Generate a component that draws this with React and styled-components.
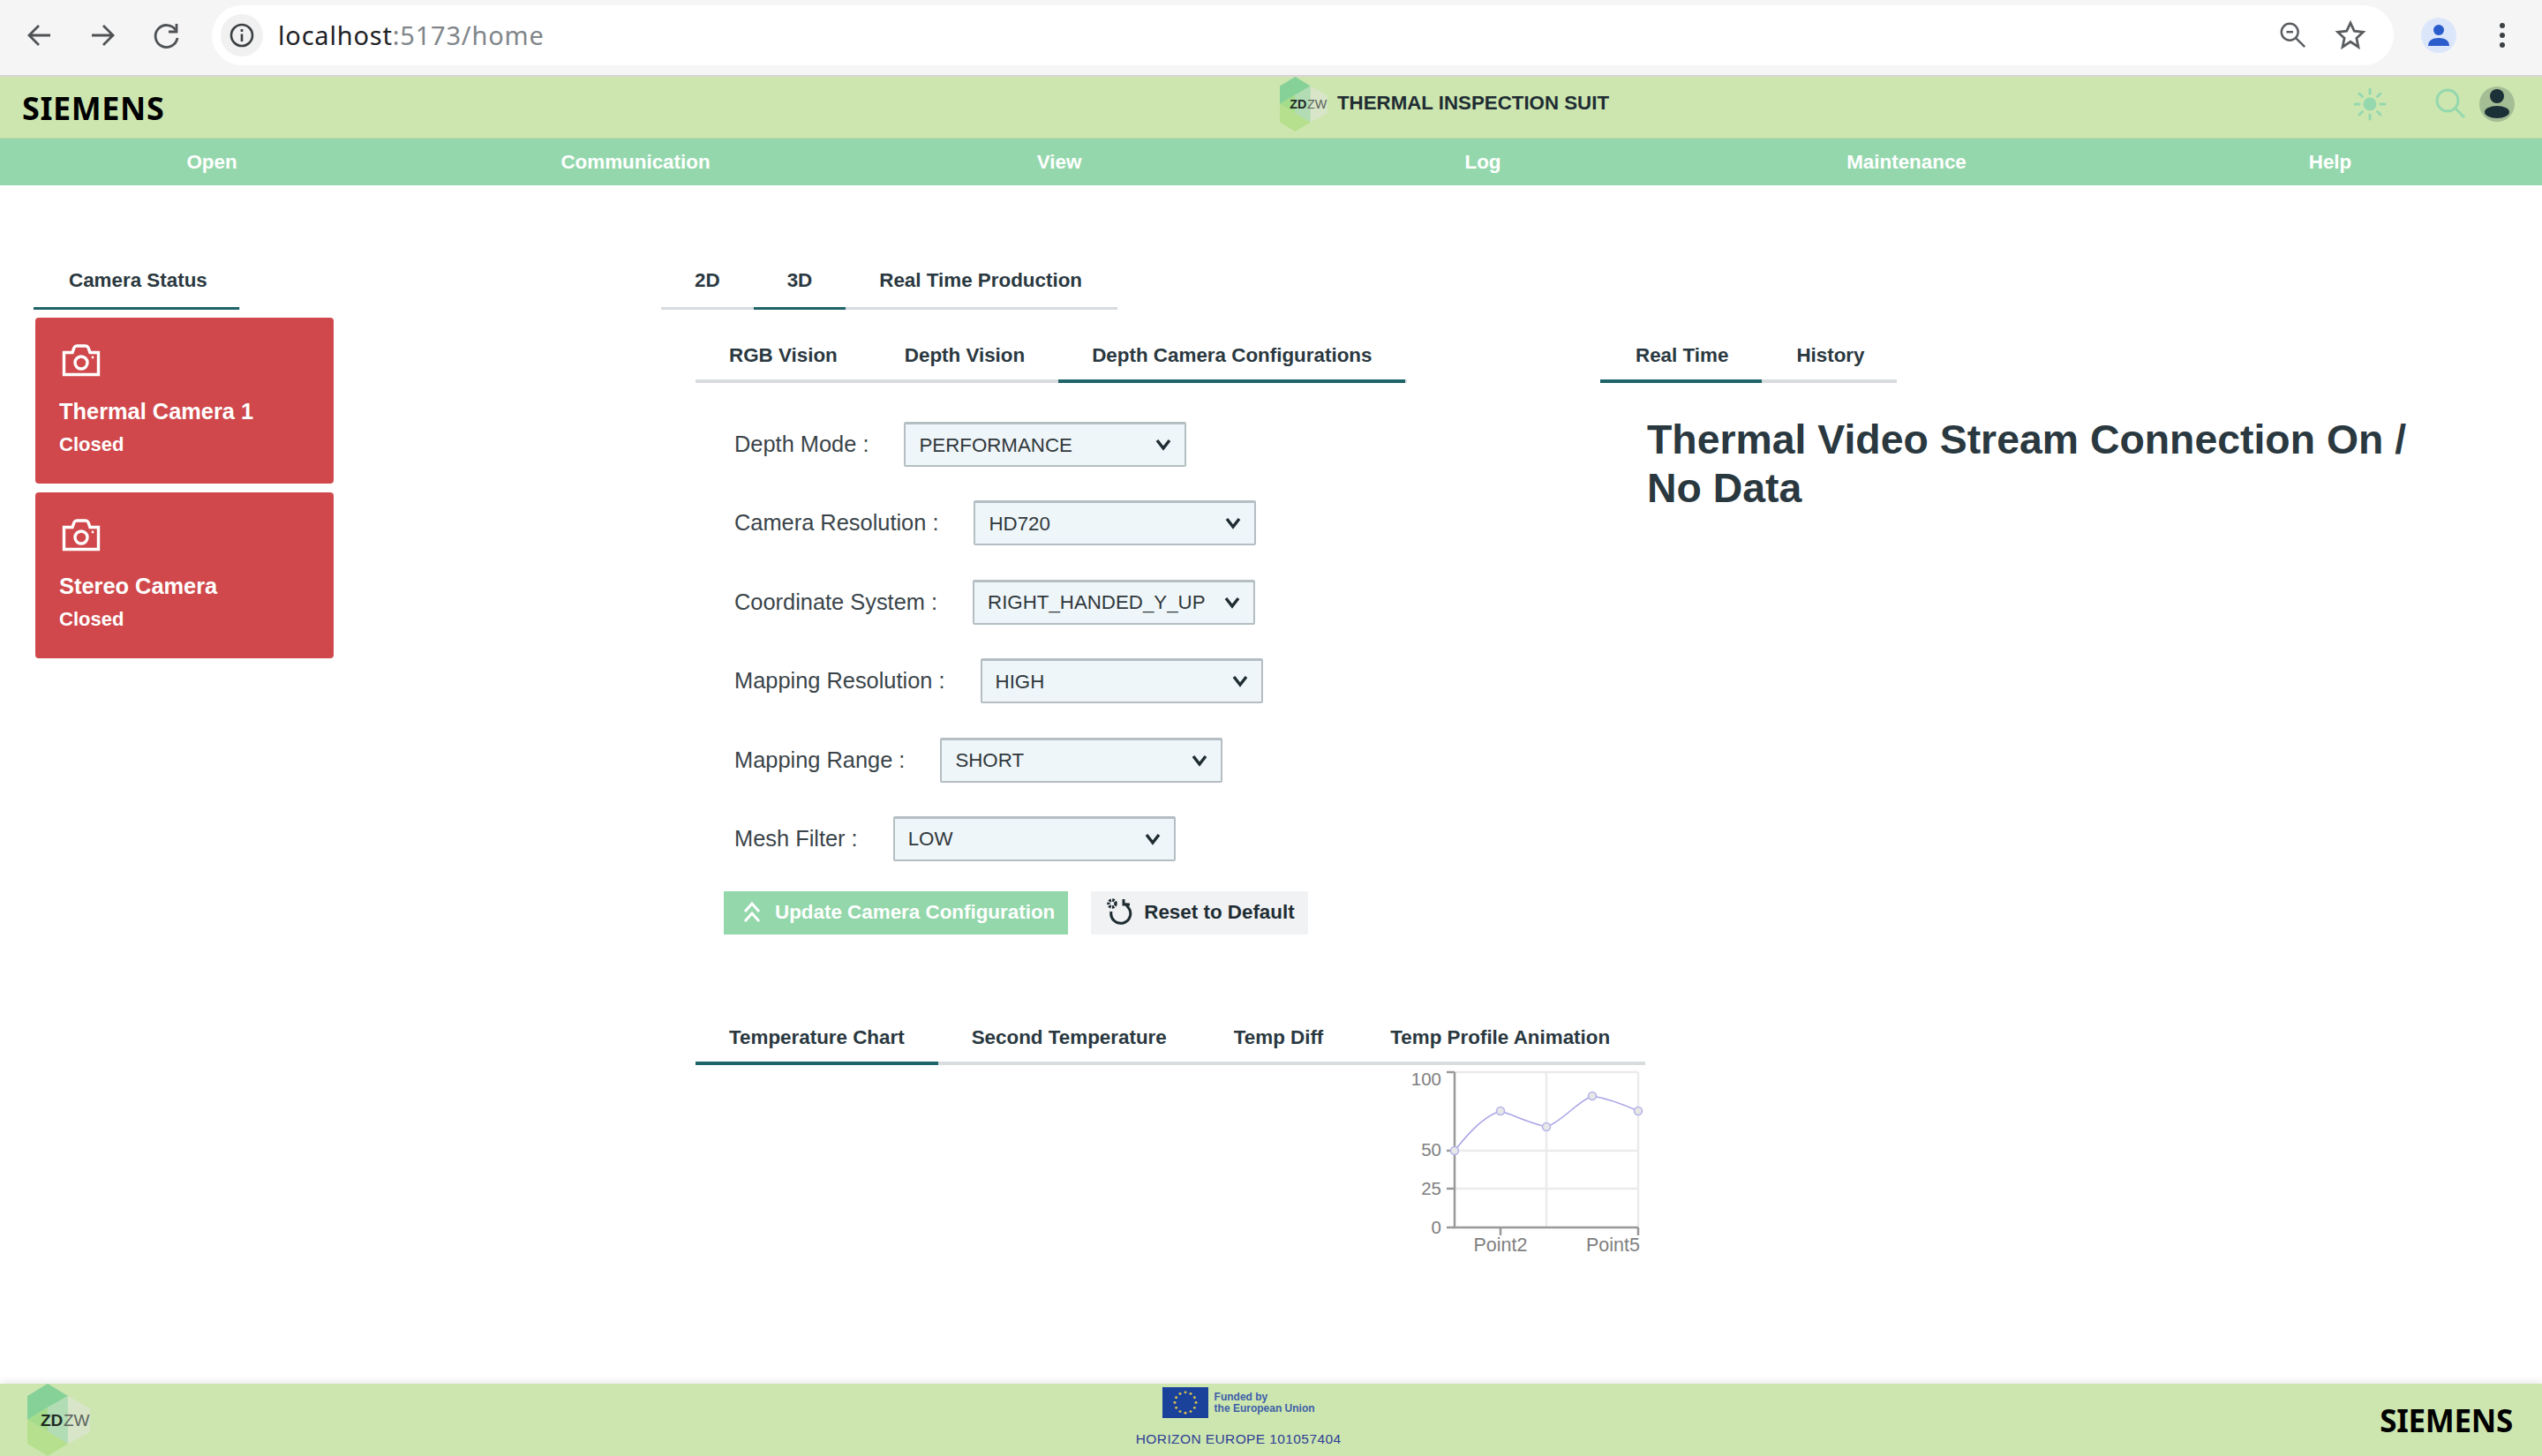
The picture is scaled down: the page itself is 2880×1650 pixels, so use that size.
import React from 'react';
import styled, { createGlobalStyle } from 'styled-components';

const GlobalStyle = createGlobalStyle`
  html, body {
    margin: 0;
    padding: 0;
    background: #fff;
    font-family: "Liberation Sans", Arial, sans-serif;
    overflow: hidden;
  }
  * { box-sizing: border-box; }
`;

const Page = styled.div`
  display: flex;
  flex-direction: column;
  width: 2880px;
  height: 1650px;
`;

/* browser chrome */
const BrowserBar = styled.div`
  display: flex;
  align-items: center;
  height: 87px;
  flex: none;
  padding: 0 0 5px 0;
  background: #f5f5f5;
  border-bottom: 2px solid #d9d4d4;
`;

const NavIcon = styled.svg`
  width: 36px;
  height: 36px;
  flex: none;
  margin-left: ${(p) => p.$left || 0}px;
  fill: none;
  stroke: #4f5255;
  stroke-width: 2.8;
`;

const AddressBar = styled.div`
  display: flex;
  align-items: center;
  width: 2472px;
  height: 68px;
  margin-left: 33px;
  padding-left: 10px;
  border-radius: 34px;
  background: #fff;
`;

const InfoBadge = styled.div`
  display: flex;
  align-items: center;
  justify-content: center;
  width: 48px;
  height: 48px;
  border-radius: 50%;
  background: #f1f1f1;
`;

const UrlText = styled.div`
  margin: 0 0 2px 17px;
  font-family: "Noto Sans", sans-serif;
  font-size: 29px;
  letter-spacing: 0.8px;
  color: #80868a;

  b {
    font-weight: 400;
    color: #202124;
  }
`;

const AddressEnd = styled.div`
  display: flex;
  align-items: center;
  gap: 30px;
  margin-left: auto;
  margin-right: 31px;
`;

const ProfileBadge = styled.div`
  display: flex;
  align-items: center;
  justify-content: center;
  width: 40px;
  height: 40px;
  margin-left: 31px;
  border-radius: 50%;
  background: #dce6fb;
`;

const MenuDots = styled.div`
  display: flex;
  flex-direction: column;
  gap: 5px;
  margin-left: 49px;

  i {
    display: block;
    width: 6px;
    height: 6px;
    border-radius: 50%;
    background: #3c4043;
  }
`;

/* app header */
const Header = styled.header`
  display: grid;
  grid-template-columns: 1450px 1fr auto;
  align-items: center;
  height: 70px;
  flex: none;
  padding-right: 31px;
  background: #cde6b0;
  border-bottom: 1px solid #c2d6a5;
`;

const Brand = styled.div`
  font-family: "Noto Sans", sans-serif;
  font-weight: 700;
  font-size: ${(p) => p.$size}px;
  letter-spacing: ${(p) => p.$spacing}px;
  color: #000;
  margin-left: ${(p) => p.$left || 0}px;
  margin-bottom: ${(p) => p.$bottom || 0}px;
`;

const TitleGroup = styled.div`
  display: flex;
  align-items: center;
  gap: 9px;
  margin-bottom: 8px;
`;

const Title = styled.div`
  margin-bottom: 2px;
  font-weight: 700;
  font-size: 22.3px;
  color: #1f2d33;
`;

const HeaderIcons = styled.div`
  display: flex;
  align-items: center;
  margin-bottom: 9px;
`;

const HeaderIcon = styled.svg`
  display: block;
  margin-left: ${(p) => p.$left || 0}px;
`;

const NavBar = styled.nav`
  display: grid;
  grid-template-columns: repeat(6, 1fr);
  align-items: center;
  height: 53px;
  flex: none;
  background: #95d7ad;
`;

const NavItem = styled.div`
  text-align: center;
  font-weight: 700;
  font-size: 22.4px;
  color: #fff;
`;

/* content */
const Main = styled.main`
  display: flex;
  flex: 1;
  padding: 82px 0 0 38px;
`;

const Sidebar = styled.aside`
  width: 711px;
  flex: none;
`;

const Cards = styled.div`
  display: flex;
  flex-direction: column;
  gap: 10px;
  width: 338px;
  margin: 9px 0 0 2px;
`;

const Card = styled.div`
  height: 188px;
  padding: 30px 27px 0;
  border-radius: 4px;
  background: #d0484b;
  color: #fff;
`;

const CardIcon = styled.svg`
  display: block;
  margin-left: 3px;
`;

const CardName = styled.div`
  margin-top: 23px;
  font-weight: 700;
  font-size: 25.4px;
  line-height: 32px;
`;

const CardStatus = styled.div`
  margin-top: 8px;
  font-weight: 700;
  font-size: 22px;
  line-height: 28px;
`;

const Tabs = styled.div`
  display: flex;
  width: ${(p) => p.$width}px;
  margin-top: ${(p) => p.$top || 0}px;
  border-bottom: ${(p) => p.$line || 4}px solid #d8dcdf;
`;

const Tab = styled.div`
  height: ${(p) => p.$height || 57}px;
  margin-bottom: -${(p) => p.$line || 4}px;
  padding: 0 ${(p) => p.$padRight || p.$pad || 38}px 0 ${(p) => p.$pad || 38}px;
  border-bottom: ${(p) => p.$line || 4}px solid ${(p) => (p.$active ? '#1f6468' : 'transparent')};
  font-weight: 700;
  font-size: 22.4px;
  line-height: 52px;
  white-space: nowrap;
  color: #2a3840;
`;

const Center = styled.section`
  display: flex;
  flex-direction: column;
  width: 1115px;
`;

const UpperRow = styled.div`
  display: flex;
  margin: 26px 0 0 39px;
`;

const ConfigPanel = styled.div`
  width: 1025px;
  flex: none;
`;

const Form = styled.form`
  display: flex;
  flex-direction: column;
  gap: 38.4px;
  margin: 44px 0 0 44px;
`;

const FormRow = styled.div`
  display: flex;
  align-items: center;
  gap: 40px;
`;

const Label = styled.label`
  font-size: 25.4px;
  color: #3a4449;
`;

const SelectWrap = styled.div`
  position: relative;
  width: 320px;
  height: 51px;
`;

const Select = styled.select`
  appearance: none;
  display: block;
  width: 100%;
  height: 100%;
  padding: 0 48px 0 15px;
  border: 2px solid #b4bec3;
  border-top-width: 3px;
  border-radius: 2px;
  background: #eff6f9;
  font-family: "Liberation Sans", Arial, sans-serif;
  font-size: 22.3px;
  color: #30383c;
`;

const Chevron = styled.svg`
  position: absolute;
  top: 17px;
  right: 16px;
  width: 20px;
  height: 18px;
  fill: none;
  stroke: #1f2d33;
  stroke-width: 3.4;
  pointer-events: none;
`;

const Actions = styled.div`
  display: flex;
  gap: 26px;
  margin: 34px 0 0 32px;
`;

const Button = styled.button`
  display: flex;
  align-items: center;
  gap: ${(p) => (p.$primary ? 16 : 12)}px;
  height: 49px;
  padding: 0 15px 0 ${(p) => (p.$primary ? 22 : 16)}px;
  border: 0;
  background: ${(p) => (p.$primary ? '#93d7ab' : '#f1f2f4')};
  color: ${(p) => (p.$primary ? '#fff' : '#1f2d33')};
  font-family: "Liberation Sans", Arial, sans-serif;
  font-weight: 700;
  font-size: 22.4px;
`;

const ThermalPanel = styled.div`
  width: 800px;
  flex: none;
`;

const ThermalText = styled.h2`
  width: 900px;
  margin: 37px 0 0 53px;
  font-weight: 700;
  font-size: 46.4px;
  line-height: 55px;
  color: #2a3840;
`;

const LowerBlock = styled.div`
  margin: 91px 0 0 39px;
  width: 1076px;
`;

const ChartRow = styled.div`
  display: flex;
  justify-content: flex-end;
  margin-top: 2px;
  padding-right: 20px;
`;

const ChartText = styled.text`
  font-family: "Liberation Sans", Arial, sans-serif;
  font-size: ${(p) => p.$size}px;
  fill: #808080;
`;

/* footer */
const Footer = styled.footer`
  display: flex;
  align-items: center;
  justify-content: space-between;
  height: 82px;
  flex: none;
  padding: 0 33px 0 31px;
  background: #cde6b0;
  box-shadow: 0 -3px 8px rgba(0, 0, 0, 0.08);
`;

const FooterCenter = styled.div`
  display: flex;
  flex-direction: column;
  align-items: center;
  gap: 15px;
  margin-left: 5px;
  padding-bottom: 6px;
`;

const EuRow = styled.div`
  display: flex;
  align-items: center;
  gap: 7px;
`;

const EuText = styled.div`
  font-weight: 700;
  font-size: 12px;
  line-height: 13px;
  color: #3d5fa8;
`;

const Horizon = styled.div`
  font-size: 15.5px;
  letter-spacing: 0.4px;
  color: #2f3f94;
`;

const LogoMark = styled.svg`
  display: block;
  flex: none;
`;

const LogoText = styled.text`
  font-family: "Liberation Sans", Arial, sans-serif;
  font-size: 19px;
  font-weight: ${(p) => (p.$strong ? 700 : 400)};
  fill: ${(p) => (p.$strong ? '#1f2a24' : '#5a635c')};
`;

const ZdzwLogo = ({ width, height }) => (
  <LogoMark width={width} height={height} viewBox="0 0 74 82">
    <polygon points="0,14 23,0 46,14 23,27 0,41" fill="#86d198" />
    <polygon points="0,41 23,27 23,54" fill="#a5dc8b" />
    <polygon points="0,41 23,54 46,68 23,82 0,68" fill="#b6df8e" />
    <polygon points="23,27 46,14 46,68 23,54" fill="#b2dcb4" />
    <polygon points="46,14 71,28 71,55 46,68" fill="#d8e5c8" />
    <LogoText $strong x="15" y="48">ZD</LogoText>
    <LogoText x="41" y="48">ZW</LogoText>
  </LogoMark>
);

const CameraIcon = () => (
  <CardIcon width="44" height="37" viewBox="0 0 44 37" fill="none" stroke="#fff" strokeWidth="3.4">
    <path d="M2.500 9.500H12L14 4Q15 2 17 2H27Q29 2 30 4L32 9.500H41.500V34.500H2.500Z" />
    <circle cx="22" cy="21" r="7" />
    <circle cx="35" cy="15" r="1.400" fill="#fff" stroke="none" />
  </CardIcon>
);

const ChevronDown = () => (
  <Chevron viewBox="0 0 20 18">
    <path d="M3 4l7 9 7-9" />
  </Chevron>
);

const config = [
  ['Depth Mode :', 'PERFORMANCE'],
  ['Camera Resolution :', 'HD720'],
  ['Coordinate System :', 'RIGHT_HANDED_Y_UP'],
  ['Mapping Resolution :', 'HIGH'],
  ['Mapping Range :', 'SHORT'],
  ['Mesh Filter :', 'LOW'],
];

const navItems = ['Open', 'Communication', 'View', 'Log', 'Maintenance', 'Help'];

const chartPoints = [
  [0, 89],
  [52, 44],
  [104, 62],
  [156, 27],
  [208, 44],
];

export default function App() {
  return (
    <Page>
      <GlobalStyle />
      <BrowserBar>
        <NavIcon $left={27} viewBox="0 0 36 36">
          <path d="M30 18H7M17 7L6 18l11 11" />
        </NavIcon>
        <NavIcon $left={35} viewBox="0 0 36 36">
          <path d="M6 18h23M19 7l11 11-11 11" />
        </NavIcon>
        <NavIcon $left={37} viewBox="0 0 36 36">
          <path d="M28 12a12.500 12.500 0 1 0 2 9" />
          <path d="M29 5v9h-9" />
        </NavIcon>
        <AddressBar>
          <InfoBadge>
            <svg width="30" height="30" viewBox="0 0 30 30" fill="none" stroke="#3c4043" strokeWidth="2.600">
              <circle cx="15" cy="15" r="12" />
              <path d="M15 13.500V22M15 8v3" />
            </svg>
          </InfoBadge>
          <UrlText><b>localhost</b>:5173/home</UrlText>
          <AddressEnd>
            <svg width="34" height="36" viewBox="0 0 36 36" fill="none" stroke="#5a5d60" strokeWidth="2.600">
              <circle cx="14" cy="14" r="10" />
              <path d="M10 14h8" />
              <path d="M21 21l11 11" />
            </svg>
            <svg width="36" height="36" viewBox="0 0 36 36" fill="none" stroke="#5a5d60" strokeWidth="2.800">
              <path d="M18 4l4.300 9.200 10 1.200-7.400 6.900 2 9.900L18 25.300l-8.900 5.900 2-9.900-7.400-6.900 10-1.200z" />
            </svg>
          </AddressEnd>
        </AddressBar>
        <ProfileBadge>
          <svg width="26" height="26" viewBox="0 0 26 26" fill="#2a5ccc">
            <circle cx="13" cy="7" r="6" />
            <path d="M1 25c0-6 5-9 12-9s12 3 12 9z" />
          </svg>
        </ProfileBadge>
        <MenuDots><i /><i /><i /></MenuDots>
      </BrowserBar>

      <Header>
        <Brand $left={25} $size={36} $spacing={0.6}>SIEMENS</Brand>
        <TitleGroup>
          <ZdzwLogo width={56} height={62} />
          <Title>THERMAL INSPECTION SUIT</Title>
        </TitleGroup>
        <HeaderIcons>
          <HeaderIcon width="38" height="38" viewBox="0 0 38 38" fill="#95d8ae" stroke="#95d8ae" strokeWidth="3" strokeLinecap="round">
            <circle cx="19" cy="19" r="7.500" stroke="none" />
            <path d="M19 2v5M19 31v5M2 19h5M31 19h5M7 7l3.500 3.500M27.500 27.500L31 31M7 31l3.500-3.500M27.500 10.500L31 7" fill="none" />
          </HeaderIcon>
          <HeaderIcon $left={54} width="36" height="36" viewBox="0 0 36 36" fill="none" stroke="#95d8ae" strokeWidth="3">
            <circle cx="15" cy="14" r="12" />
            <path d="M24 23l10 10" />
          </HeaderIcon>
          <HeaderIcon $left={15} width="40" height="40" viewBox="0 0 40 40">
            <circle cx="20" cy="20" r="20" fill="#a4bd94" />
            <circle cx="20" cy="11" r="8" fill="#1c3038" />
            <ellipse cx="20" cy="29" rx="14" ry="7" fill="#1c3038" />
          </HeaderIcon>
        </HeaderIcons>
      </Header>

      <NavBar>
        {navItems.map((item) => (
          <NavItem key={item}>{item}</NavItem>
        ))}
      </NavBar>

      <Main>
        <Sidebar>
          <Tabs $width={234} $line={3}>
            <Tab $active $line={3} $height={59} $pad={40} $padRight={36}>Camera Status</Tab>
          </Tabs>
          <Cards>
            <Card>
              <CameraIcon />
              <CardName>Thermal Camera 1</CardName>
              <CardStatus>Closed</CardStatus>
            </Card>
            <Card>
              <CameraIcon />
              <CardName>Stereo Camera</CardName>
              <CardStatus>Closed</CardStatus>
            </Card>
          </Cards>
        </Sidebar>

        <Center>
          <Tabs $width={517} $line={3}>
            <Tab $line={3} $height={59}>2D</Tab>
            <Tab $line={3} $height={59} $active>3D</Tab>
            <Tab $line={3} $height={59}>Real Time Production</Tab>
          </Tabs>

          <UpperRow>
            <ConfigPanel>
              <Tabs $width={806}>
                <Tab>RGB Vision</Tab>
                <Tab>Depth Vision</Tab>
                <Tab $active>Depth Camera Configurations</Tab>
              </Tabs>
              <Form>
                {config.map(([label, value]) => (
                  <FormRow key={label}>
                    <Label>{label}</Label>
                    <SelectWrap>
                      <Select defaultValue={value}>
                        <option>{value}</option>
                      </Select>
                      <ChevronDown />
                    </SelectWrap>
                  </FormRow>
                ))}
              </Form>
              <Actions>
                <Button type="button" $primary>
                  <svg width="20" height="26" viewBox="0 0 20 26" fill="none" stroke="#fff" strokeWidth="3">
                    <path d="M2 12l8-9 8 9M2 23l8-9 8 9" />
                  </svg>
                  Update Camera Configuration
                </Button>
                <Button type="button">
                  <svg width="32" height="34" viewBox="0 0 32 34" fill="none" stroke="#1f2d33" strokeWidth="3">
                    <circle cx="8" cy="7" r="4" strokeWidth="3.500" strokeDasharray="2.500 1.200" />
                    <path d="M7 16a11 11 0 1 0 19-5l-3-4" />
                    <path d="M21 2v6h7" />
                  </svg>
                  Reset to Default
                </Button>
              </Actions>
            </ConfigPanel>

            <ThermalPanel>
              <Tabs $width={336}>
                <Tab $active $pad={40} $padRight={38}>Real Time</Tab>
                <Tab $pad={39}>History</Tab>
              </Tabs>
              <ThermalText>Thermal Video Stream Connection On / No Data</ThermalText>
            </ThermalPanel>
          </UpperRow>

          <LowerBlock>
            <Tabs $width={1076}>
              <Tab $active>Temperature Chart</Tab>
              <Tab>Second Temperature</Tab>
              <Tab>Temp Diff</Tab>
              <Tab>Temp Profile Animation</Tab>
            </Tabs>
            <ChartRow>
              <svg width="240" height="232" viewBox="-44 -6 240 232" overflow="visible">
                <ChartText $size={20.500} x="-15" y="15" textAnchor="end">100</ChartText>
                <ChartText $size={20.500} x="-15" y="95" textAnchor="end">50</ChartText>
                <ChartText $size={20.500} x="-15" y="139" textAnchor="end">25</ChartText>
                <ChartText $size={20.500} x="-15" y="183" textAnchor="end">0</ChartText>
                <ChartText $size={21.500} x="52" y="203" textAnchor="middle">Point2</ChartText>
                <ChartText $size={21.500} x="210" y="203" textAnchor="end">Point5</ChartText>
                <g stroke="#ebebeb" strokeWidth="2.500" fill="none">
                  <path d="M0 0H208M0 89H208M0 132H208M104 0V176M208 0V176" />
                </g>
                <g stroke="#999" strokeWidth="2.500" fill="none">
                  <path d="M0 0V176H208" />
                  <path d="M-9 0H0M-9 89H0M-9 132H0M-9 176H0M52 176V185M208 176V185" />
                </g>
                <path
                  d="M0 89C18 66 34 50 52 44C70 50 86 58 104 62C122 56 138 34 156 27C174 30 190 36 208 44"
                  fill="none"
                  stroke="#a9a6e6"
                  strokeWidth="1.600"
                />
                {chartPoints.map(([x, y]) => (
                  <circle key={x} cx={x} cy={y} r="4.500" fill="#e6e8e6" stroke="#b7b4ea" strokeWidth="1.600" />
                ))}
              </svg>
            </ChartRow>
          </LowerBlock>
        </Center>
      </Main>

      <Footer>
        <ZdzwLogo width={74} height={82} />
        <FooterCenter>
          <EuRow>
            <svg width="52" height="35" viewBox="0 0 52 36" preserveAspectRatio="none">
              <rect width="52" height="36" fill="#1a429b" />
              {Array.from({ length: 12 }, (_, i) => (
                <circle
                  key={i}
                  cx={26 + 12 * Math.cos((i * Math.PI) / 6)}
                  cy={18 + 12 * Math.sin((i * Math.PI) / 6)}
                  r="1.500"
                  fill="#d8c04a"
                />
              ))}
            </svg>
            <EuText>Funded by<br />the European Union</EuText>
          </EuRow>
          <Horizon>HORIZON EUROPE 101057404</Horizon>
        </FooterCenter>
        <Brand $size={35} $spacing={-0.3}>SIEMENS</Brand>
      </Footer>
    </Page>
  );
}
